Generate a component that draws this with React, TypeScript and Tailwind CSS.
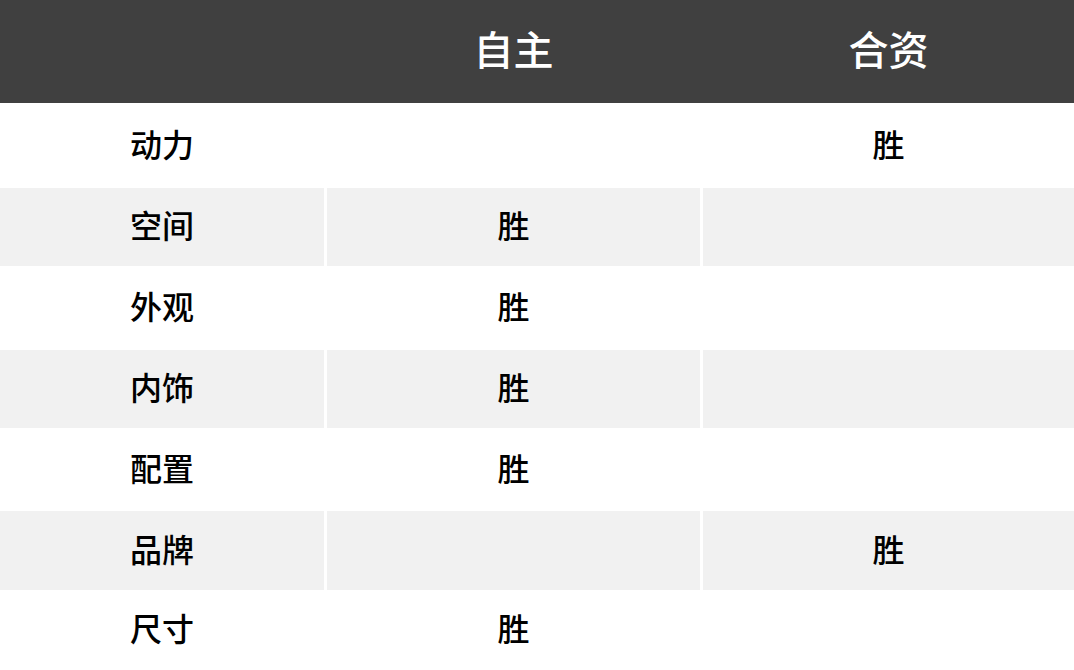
import React from 'react';

interface Row {
  name: string;
  winner: 'own' | 'joint';
}

const rows: Row[] = [
  { name: '动力', winner: 'joint' },
  { name: '空间', winner: 'own' },
  { name: '外观', winner: 'own' },
  { name: '内饰', winner: 'own' },
  { name: '配置', winner: 'own' },
  { name: '品牌', winner: 'joint' },
  { name: '尺寸', winner: 'own' },
];

// row heights read from the screenshot
const heights = ['h-[85px]', 'h-[78px]', 'h-[84px]', 'h-[78px]', 'h-[83px]', 'h-[79px]', 'h-[80px]'];

const font = { fontFamily: '"Noto Sans CJK SC", "Noto Sans", sans-serif' };

const App: React.FC = () => {
  return (
    <div className="w-[1074px] h-[670px] overflow-hidden bg-white" style={font}>
      {/* 表头 */}
      <div className="grid grid-cols-[324px_373px_1fr] gap-x-[3px] h-[103px] bg-[#404040] text-white text-[40px] font-medium leading-none">
        <div />
        <div className="flex items-center justify-center pb-[8px]">自主</div>
        <div className="flex items-center justify-center pb-[8px]">合资</div>
      </div>

      {rows.map((row, i) => {
        const cell = i % 2 === 1 ? 'bg-[#f1f1f1]' : 'bg-white';
        return (
          <div
            key={row.name}
            className={`grid grid-cols-[324px_373px_1fr] gap-x-[3px] ${heights[i]} text-black text-[32px] font-medium leading-none`}
          >
            <div className={`flex items-center justify-center pb-[6px] ${cell}`}>{row.name}</div>
            <div className={`flex items-center justify-center pb-[6px] ${cell}`}>
              {row.winner === 'own' ? '胜' : ''}
            </div>
            <div className={`flex items-center justify-center pb-[6px] ${cell}`}>
              {row.winner === 'joint' ? '胜' : ''}
            </div>
          </div>
        );
      })}
    </div>
  );
};

export default App;
